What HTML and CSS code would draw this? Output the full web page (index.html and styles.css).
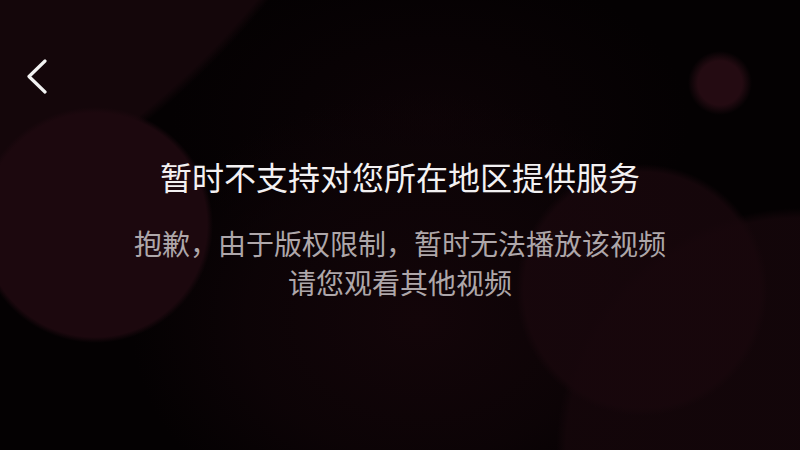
FILE: index.html
```html
<!DOCTYPE html>
<html lang="zh-CN">
<head>
<meta charset="utf-8">
<title>暂时不支持对您所在地区提供服务</title>
<link rel="stylesheet" href="styles.css">
</head>
<body>
<div class="page">
  <header class="topbar">
    <button class="back" aria-label="返回">
      <svg width="22" height="36" viewBox="0 0 22 36" fill="none">
        <path d="M19 2 L3 17.5 L19 33" stroke="#f2f2f2" stroke-width="3.2" stroke-linecap="round" stroke-linejoin="round"/>
      </svg>
    </button>
  </header>
  <main class="message">
    <h1 class="title">暂时不支持对您所在地区提供服务</h1>
    <p class="desc">抱歉，由于版权限制，暂时无法播放该视频<br>请您观看其他视频</p>
  </main>
</div>
</body>
</html>
```

FILE: styles.css
```css
html, body {
  margin: 0;
  padding: 0;
  background: #040102;
}

.page {
  width: 800px;
  height: 450px;
  overflow: hidden;
  display: flex;
  flex-direction: column;
  font-family: "Noto Sans CJK SC", "Noto Sans", sans-serif;
  background:
    radial-gradient(circle 32px at 720px 83px, rgba(36,11,18,1) 22px, rgba(36,11,18,0) 32px),
    radial-gradient(circle 118px at 95px 225px, rgba(28,8,14,1) 112px, rgba(28,8,14,0) 118px),
    radial-gradient(circle 126px at 642px 290px, rgba(24,7,12,0.85) 118px, rgba(24,7,12,0) 126px),
    radial-gradient(circle 244px at 800px 452px, rgba(20,6,10,0.9) 234px, rgba(20,6,10,0) 244px),
    radial-gradient(circle 796px at -350px -500px, rgba(20,6,10,1) 786px, rgba(20,6,10,0) 796px),
    radial-gradient(ellipse 290px 230px at 420px 320px, rgba(19,5,9,1) 0%, rgba(14,4,7,0.8) 60%, rgba(14,4,7,0) 100%),
    radial-gradient(ellipse 260px 160px at 430px 120px, rgba(12,3,6,1) 0%, rgba(12,3,6,0) 100%),
    #040102;
}

.topbar {
  display: flex;
  padding: 59px 0 0 26px;
}

.back {
  display: block;
  width: 22px;
  height: 36px;
  padding: 0;
  margin: 0;
  border: 0;
  background: none;
  cursor: pointer;
}

.back svg {
  display: block;
}

.message {
  display: flex;
  flex-direction: column;
  align-items: center;
  margin-top: 61px;
  text-align: center;
}

.title {
  margin: 0;
  font-size: 32px;
  line-height: 40px;
  font-weight: 400;
  color: #f3f1f2;
}

.desc {
  margin: 28px 0 0;
  font-size: 28px;
  line-height: 39px;
  font-weight: 400;
  color: #aea7aa;
}
```
